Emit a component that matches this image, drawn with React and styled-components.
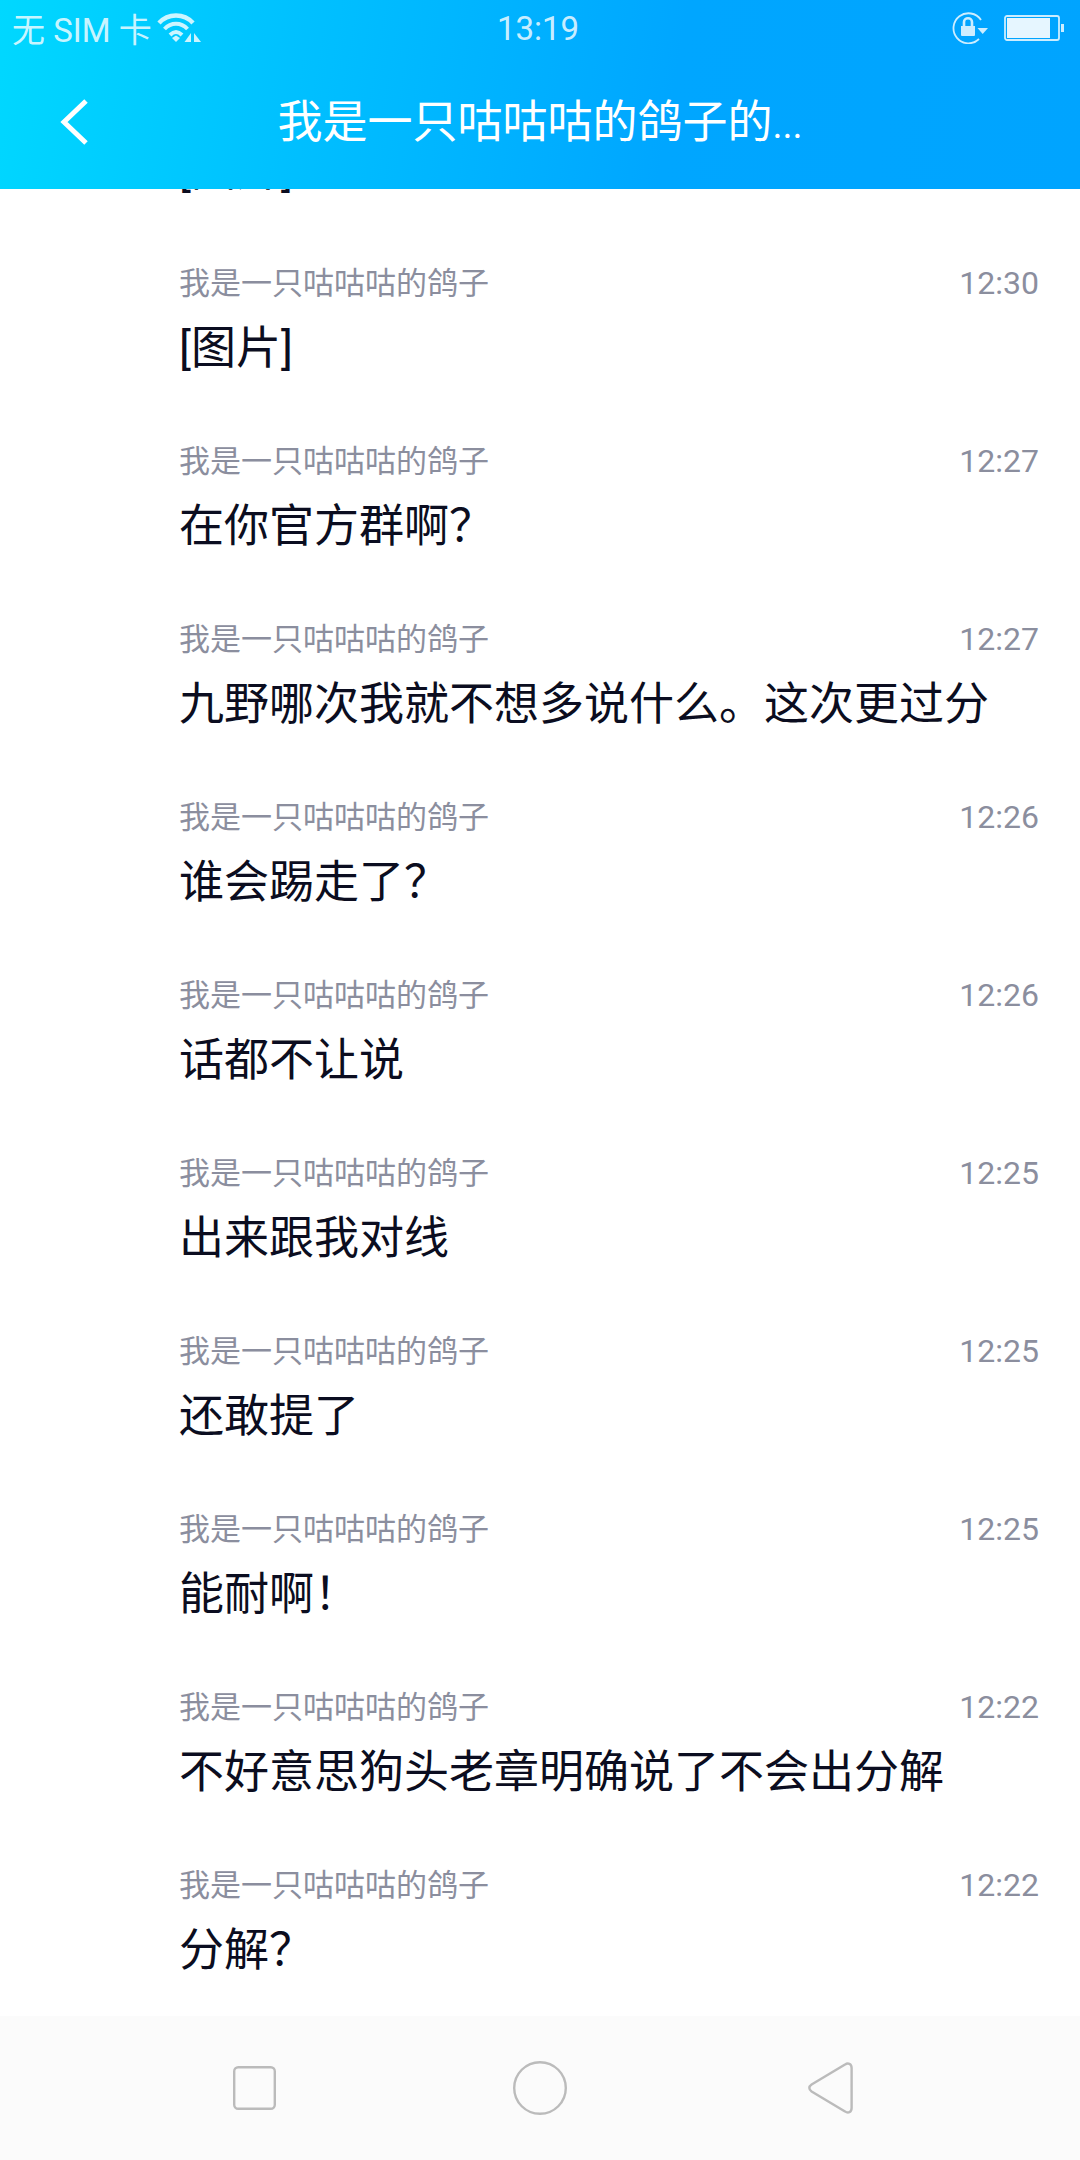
import React from "react";
import styled, { createGlobalStyle } from "styled-components";

const Global = createGlobalStyle`
  html, body { margin: 0; padding: 0; background: #fff; }
  * { box-sizing: border-box; }
`;

const Page = styled.div`
  width: 1080px;
  height: 2160px;
  display: flex;
  flex-direction: column;
  overflow: hidden;
  font-family: Roboto, "Noto Sans CJK SC", sans-serif;
  background: #fff;
`;

const Header = styled.header`
  flex: none;
  height: 189px;
  position: relative;
  z-index: 1;
  background: linear-gradient(100deg, #00d8ff 0%, #00c0ff 28%, #00a6ff 62%, #00a4ff 100%);
  color: #fff;
  display: flex;
  flex-direction: column;
`;

const StatusBar = styled.div`
  height: 56px;
  padding: 0 16px 0 12px;
  display: grid;
  grid-template-columns: 1fr auto 1fr;
  align-items: center;
  color: rgba(255, 255, 255, 0.8);
  font-size: 33px;
`;

const StatusLeft = styled.div`
  display: flex;
  align-items: center;
  gap: 5px;
`;

const StatusRight = styled.div`
  display: flex;
  align-items: center;
  justify-content: flex-end;
  gap: 16px;
`;

const NavBar = styled.div`
  flex: 1;
  display: flex;
  align-items: center;
  justify-content: center;
  position: relative;
  padding-top: 3px;
`;

const BackButton = styled.button`
  position: absolute;
  left: 59px;
  top: 41px;
  padding: 0;
  border: 0;
  background: none;
  display: flex;
`;

const Title = styled.h1`
  margin: 0;
  font-size: 45px;
  font-weight: 400;
  line-height: 60px;
  white-space: nowrap;
`;

const TitleDots = styled.span`
  font-size: 38px;
`;

const ListViewport = styled.main`
  flex: 1;
  overflow: hidden;
`;

const List = styled.div`
  margin-top: -64px;
  padding: 0 41px 0 179px;
  display: flex;
  flex-direction: column;
`;

const Row = styled.article`
  height: ${(p) => (p.$clipped ? "132px" : "178px")};
`;

const RowHead = styled.div`
  display: flex;
  justify-content: space-between;
  align-items: center;
  height: 46px;
`;

const Sender = styled.span`
  font-size: 31px;
  color: #8b8e9e;
  white-space: nowrap;
`;

const Time = styled.time`
  font-size: 32px;
  padding-top: 5px;
  color: #8b8e9e;
`;

const Message = styled.p`
  margin: 0;
  padding-top: 16px;
  font-size: 45px;
  line-height: 60px;
  color: #0b0d20;
  white-space: nowrap;
`;

const NavFooter = styled.footer`
  flex: none;
  height: 144px;
  background: #fbfbfb;
  display: grid;
  grid-template-columns: 233px 43px 237px 54px 241px 45px;
  align-items: center;
`;

const NavSlot = styled.div`
  grid-column: ${(p) => p.$col};
  display: flex;
  align-items: center;
  justify-content: center;
  height: 100%;
`;

const messages = [
  ["[图片]", "12:30"],
  ["在你官方群啊？", "12:27"],
  ["九野哪次我就不想多说什么。这次更过分", "12:27"],
  ["谁会踢走了？", "12:26"],
  ["话都不让说", "12:26"],
  ["出来跟我对线", "12:25"],
  ["还敢提了", "12:25"],
  ["能耐啊！", "12:25"],
  ["不好意思狗头老章明确说了不会出分解", "12:22"],
  ["分解？", "12:22"],
];

const WifiIcon = () => (
  <svg width="45" height="30" viewBox="0 0 45 30" fill="none">
    <path d="M2 10 C11 0 27 0 36 10" stroke="currentColor" strokeWidth="4.4" />
    <path d="M7.5 16 C14 9 24 9 30.5 16" stroke="currentColor" strokeWidth="4" />
    <path d="M13 22 C17 18 21 18 25 22" stroke="currentColor" strokeWidth="4" />
    <path d="M15 25 L19 22.5 L23 25 L19 29 Z" fill="currentColor" />
    <path d="M34 20 V29 H27.5 Z" fill="currentColor" />
    <path d="M37 20 V29 H44 Z" fill="currentColor" />
  </svg>
);

const LockIcon = () => (
  <svg width="36" height="32" viewBox="0 0 36 32" fill="none">
    <path d="M29 8 A15 15 0 1 0 27 27" stroke="currentColor" strokeWidth="1.8" />
    <path d="M25.5 16 H36 L30.7 22 Z" fill="currentColor" />
    <path d="M9 14 H23 V23 C23 24 22 24 21 24 H11 C10 24 9 24 9 23 Z" fill="currentColor" />
    <path d="M12 14 V10 C12 5 20 5 20 10 V14" stroke="currentColor" strokeWidth="2.6" />
  </svg>
);

const BatteryIcon = () => (
  <svg width="60" height="26" viewBox="0 0 60 26" fill="none">
    <rect x="1" y="1" width="54" height="24" rx="2" stroke="currentColor" strokeWidth="1.8" />
    <rect x="3" y="3" width="43" height="20" fill="#fff" fillOpacity="0.9" />
    <rect x="57" y="9" width="3" height="8" fill="currentColor" />
  </svg>
);

const BackIcon = () => (
  <svg width="32" height="50" viewBox="0 0 32 50" fill="none">
    <path d="M27 4 L5 25 L27 46" stroke="#fff" strokeWidth="5" />
  </svg>
);

const SquareIcon = () => (
  <svg width="43" height="44" viewBox="0 0 43 44" fill="none">
    <rect x="1.2" y="1.2" width="40.6" height="41.6" rx="4" stroke="#bbb" strokeWidth="2.4" />
  </svg>
);

const CircleIcon = () => (
  <svg width="54" height="54" viewBox="0 0 54 54" fill="none">
    <circle cx="27" cy="27" r="25.8" stroke="#bbb" strokeWidth="2.4" />
  </svg>
);

const TriangleIcon = () => (
  <svg width="45" height="52" viewBox="0 0 45 52" fill="none">
    <path
      d="M37 2.6 C40 0.4 43.6 1.6 43.6 6 V46 C43.6 50.4 40 51.6 37 49.4 L3.6 29.5 C0.6 27.5 0.6 24.5 3.6 22.5 Z"
      stroke="#bbb"
      strokeWidth="2.4"
    />
  </svg>
);

export default function App() {
  return (
    <Page>
      <Global />
      <Header>
        <StatusBar>
          <StatusLeft>
            <span>无 SIM 卡</span>
            <WifiIcon />
          </StatusLeft>
          <span>13:19</span>
          <StatusRight>
            <LockIcon />
            <BatteryIcon />
          </StatusRight>
        </StatusBar>
        <NavBar>
          <BackButton aria-label="back">
            <BackIcon />
          </BackButton>
          <Title>
            我是一只咕咕咕的鸽子的<TitleDots>...</TitleDots>
          </Title>
        </NavBar>
      </Header>
      <ListViewport>
        <List>
          <Row $clipped>
            <Message>[图片]</Message>
          </Row>
          {messages.map(([text, time], i) => (
            <Row key={i}>
              <RowHead>
                <Sender>我是一只咕咕咕的鸽子</Sender>
                <Time>{time}</Time>
              </RowHead>
              <Message>{text}</Message>
            </Row>
          ))}
        </List>
      </ListViewport>
      <NavFooter>
        <NavSlot $col={2}>
          <SquareIcon />
        </NavSlot>
        <NavSlot $col={4}>
          <CircleIcon />
        </NavSlot>
        <NavSlot $col={6}>
          <TriangleIcon />
        </NavSlot>
      </NavFooter>
    </Page>
  );
}
